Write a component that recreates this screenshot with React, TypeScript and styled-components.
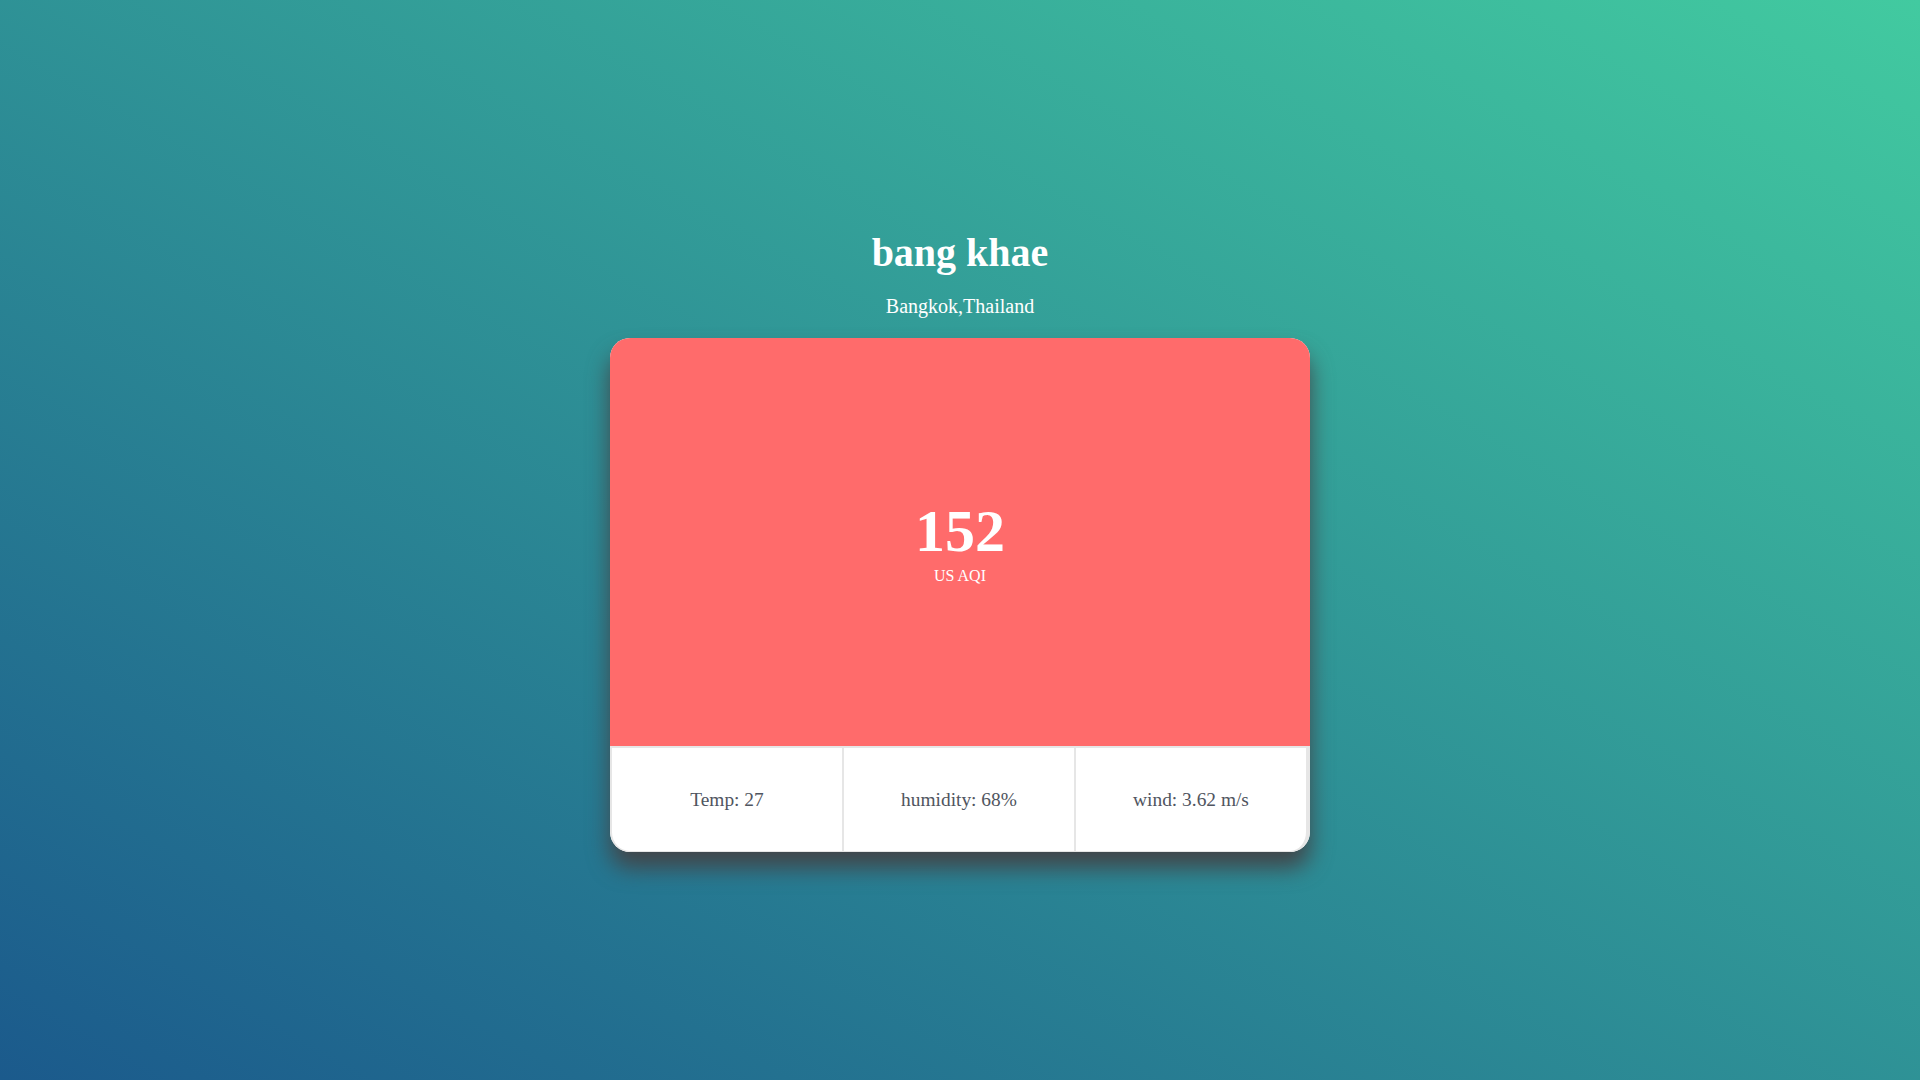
import React from "react";
import styled, { createGlobalStyle } from "styled-components";

const GlobalStyle = createGlobalStyle`
  html, body {
    margin: 0;
    padding: 0;
  }
  body {
    font-family: "Liberation Serif", "Times New Roman", serif;
  }
`;

const Page = styled.div`
  min-height: 100vh;
  display: flex;
  flex-direction: column;
  align-items: center;
  justify-content: center;
  background: linear-gradient(to top right, #1b5a8c, #42caa0);
`;

const Title = styled.h1`
  margin: 0 0 17px;
  font-size: 40px;
  line-height: 48px;
  font-weight: 700;
  color: #fff;
`;

const Subtitle = styled.p`
  margin: 0 0 19px;
  font-size: 20px;
  line-height: 25px;
  color: #fff;
`;

const Card = styled.div`
  width: 700px;
  border-radius: 20px;
  overflow: hidden;
  background: #fff;
  box-shadow: 0 16px 22px 0 rgba(66, 70, 74, 1);
`;

const AqiPanel = styled.div<{ $color: string }>`
  box-sizing: border-box;
  height: 408px;
  padding-top: 2px;
  background: ${(p) => p.$color};
  display: flex;
  flex-direction: column;
  align-items: center;
  justify-content: center;
  gap: 6px;
  color: #fff;
`;

const AqiValue = styled.div`
  font-size: 60px;
  line-height: 60px;
  font-weight: 700;
`;

const AqiLabel = styled.div`
  font-size: 16px;
  line-height: 18px;
`;

const StatsRow = styled.div`
  display: grid;
  grid-template-columns: 232px 232px 236px;
  height: 106px;
`;

const StatCell = styled.div<{ $first?: boolean; $last?: boolean }>`
  box-sizing: border-box;
  display: flex;
  align-items: center;
  justify-content: center;
  padding-top: 2px;
  background: #fff;
  border-top: 2px solid #e6e6e6;
  border-left: 2px solid #e6e6e6;
  border-bottom: 1px solid #e6e6e6;
  border-right: ${(p) => (p.$last ? "4px solid #e6e6e6" : "none")};
  border-bottom-left-radius: ${(p) => (p.$first ? "20px" : "0")};
  border-bottom-right-radius: ${(p) => (p.$last ? "20px" : "0")};
  font-size: 19.4px;
  line-height: 22px;
  color: #505560;
`;

export default function App() {
  return (
    <>
      <GlobalStyle />
      <Page>
        <Title>bang khae</Title>
        <Subtitle>Bangkok,Thailand</Subtitle>
        <Card>
          <AqiPanel $color="#ff6b6b">
            <AqiValue>152</AqiValue>
            <AqiLabel>US AQI</AqiLabel>
          </AqiPanel>
          <StatsRow>
            <StatCell $first>Temp: 27</StatCell>
            <StatCell>humidity: 68%</StatCell>
            <StatCell $last>wind: 3.62 m/s</StatCell>
          </StatsRow>
        </Card>
      </Page>
    </>
  );
}
